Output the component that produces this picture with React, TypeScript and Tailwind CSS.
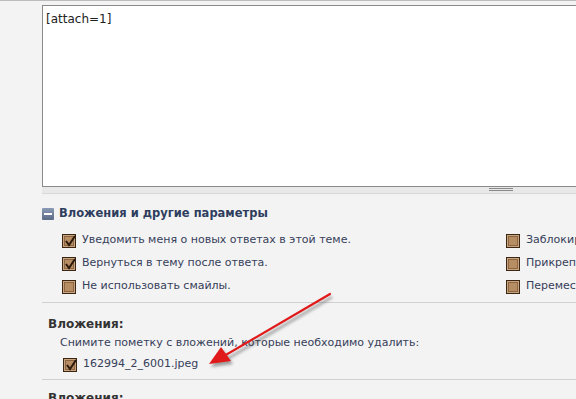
const font = { fontFamily: '"DejaVu Sans", Verdana, sans-serif' }

function Box({ checked }: { checked?: boolean }) {
  return (
    <span className="relative flex h-[14px] w-[14px] shrink-0 items-center justify-center border border-[#3b2614] bg-[#c9a47e]">
      <span className="h-[10px] w-[10px] border border-[#8a6644] bg-[#b78d64]" />
      {checked && (
        <svg className="absolute left-[1px] top-[0px]" width="13" height="12" viewBox="0 0 13 12">
          <path d="M2 6 L5 10 L11 1" fill="none" stroke="#2b1a0c" strokeWidth="2" />
        </svg>
      )}
    </span>
  )
}

function Opt({ checked, label }: { checked?: boolean; label: string }) {
  return (
    <div className="flex h-[23px] items-center gap-[6px] whitespace-nowrap">
      <Box checked={checked} />
      <span className="text-[11px] text-[#36405a]">{label}</span>
    </div>
  )
}

export default function App() {
  return (
    <div className="relative h-[399px] w-[576px] overflow-hidden bg-[#f3f3f3]" style={font}>
      <div className="h-[1px] bg-[#bdbdbd]" />
      <div className="pl-[42px] pt-[4px]">
        <div className="h-[182px] border-l border-t border-b border-[#8a8a8a] bg-white px-[3px] pt-[4px] text-[12px] text-[#222]">
          [attach=1]
        </div>
        <div className="flex h-[7px] justify-center border-b border-[#d8d8d8] bg-[#e8e8e8] pl-[384px]">
          <div className="mt-[1px] flex w-[24px] flex-col gap-[1px]">
            <div className="h-[1px] bg-[#8a8a8a]" />
            <div className="h-[1px] bg-[#8a8a8a]" />
          </div>
        </div>
      </div>

      <div className="pl-[42px] pt-[13px]">
        <div className="flex h-[14px] items-center gap-[5px]">
          <span className="flex h-[12px] w-[12px] items-center justify-center rounded-[1px] bg-gradient-to-b from-[#8a9ab5] to-[#5b6b88]">
            <span className="h-[2px] w-[8px] bg-white" />
          </span>
          <span className="text-[11.5px] font-bold text-[#2e3d5e]">Вложения и другие параметры</span>
        </div>
        <div className="flex pt-[8px]">
          <div className="flex w-[464px] shrink-0 flex-col pl-[20px]">
            <Opt checked label="Уведомить меня о новых ответах в этой теме." />
            <Opt checked label="Вернуться в тему после ответа." />
            <Opt label="Не использовать смайлы." />
          </div>
          <div className="flex flex-col">
            <Opt label="Заблокировать тему" />
            <Opt label="Прикрепить тему" />
            <Opt label="Переместить тему" />
          </div>
        </div>
      </div>

      <div className="ml-[42px] mt-[4px] h-[1px] bg-[#d0d0d0]" />
      <div className="pl-[48px] pt-[13px]">
        <div className="text-[12px] font-bold leading-[16px] text-[#333]">Вложения:</div>
        <div className="pl-[12px] pt-[4px] text-[11px] leading-[14px] text-[#36405a]">
          Снимите пометку с вложений, которые необходимо удалить:
        </div>
        <div className="pl-[15px] pt-[3px]">
          <Opt checked label="162994_2_6001.jpeg" />
        </div>
      </div>
      <div className="ml-[42px] mt-[3px] h-[1px] bg-[#d0d0d0]" />
      <div className="pl-[48px] pt-[10px] text-[12px] font-bold leading-[16px] text-[#333]">Вложения:</div>

      <svg className="absolute left-0 top-0" width="576" height="399" viewBox="0 0 576 399">
        <defs>
          <filter id="sh" x="-20%" y="-20%" width="140%" height="140%">
            <feGaussianBlur stdDeviation="1.5" />
          </filter>
        </defs>
        <g opacity="0.45" filter="url(#sh)" transform="translate(2,3)">
          <line x1="330" y1="294" x2="225" y2="356" stroke="#333" strokeWidth="2.5" />
          <path d="M209 364 L221 347 L231 361 Z" fill="#333" />
        </g>
        <line x1="330" y1="294" x2="224" y2="356" stroke="#e01a1a" strokeWidth="2.2" strokeLinecap="round" />
        <path d="M209 364 L221 347 L231 361 Z" fill="#e01a1a" />
      </svg>
    </div>
  )
}
